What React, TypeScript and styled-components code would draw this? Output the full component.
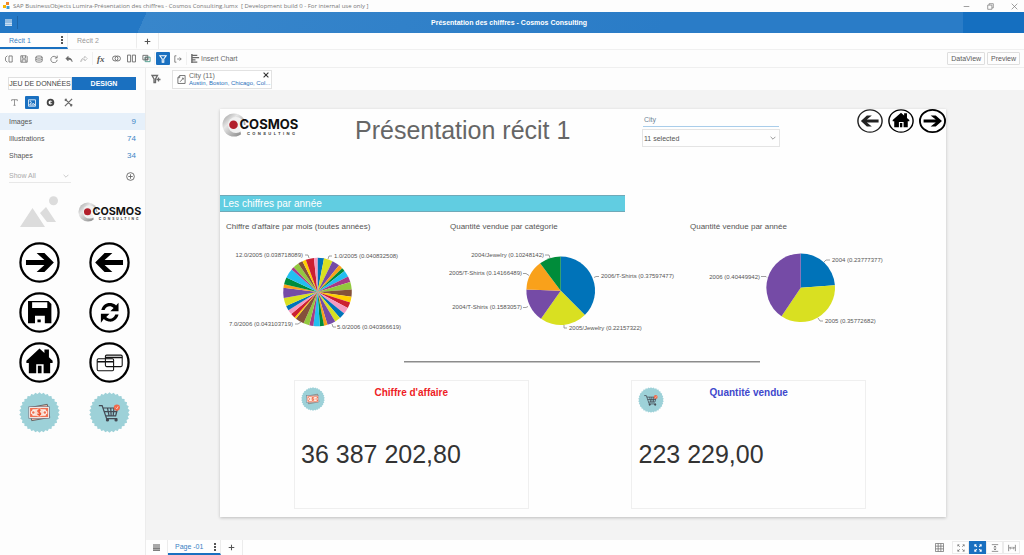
import React from "react";
import styled, { createGlobalStyle } from "styled-components";

const sans = `"Liberation Sans", Arial, sans-serif`;
const BLUE = "#1a70c0";
const GREY = "#6a6a6a";

const GlobalStyle = createGlobalStyle`
  *, *::before, *::after { box-sizing: border-box; }
  body { margin: 0; background: #fdfdfd; font-family: ${sans}; font-size: 7px; line-height: 9px; color: #555; }
  button, select { font: inherit; color: inherit; }
  button { border: 0; padding: 0; background: none; cursor: pointer; }
  svg { display: block; flex: none; }
  h1, h2, p, ul { margin: 0; padding: 0; }
`;

/* ---------- shell ---------- */

const App = styled.div`
  display: flex;
  flex-direction: column;
  min-height: 100vh;
`;

const WindowBar = styled.header`
  display: flex;
  align-items: center;
  gap: 3px;
  height: 12px;
  padding: 0 6px 0 3px;
  font-family: "Open Sans", sans-serif;
  font-size: 6px;
  color: #777;
  white-space: nowrap;
`;

const WindowControls = styled.div`
  display: flex;
  gap: 17px;
  margin-left: auto;
  color: #777;
`;

const AppBar = styled.div`
  display: grid;
  grid-template-columns: 1fr auto 1fr;
  align-items: center;
  height: 21px;
  padding-right: 6px;
  color: #fff;
  font-weight: 700;
  background:
    linear-gradient(90deg, transparent 94%, #156fc0 94%),
    linear-gradient(114deg, #2478c5 134px, #3886cb 134px, #2a7cc7 65%);
`;

const MenuButton = styled.button`
  display: flex;
  align-items: center;
  justify-content: center;
  width: 18px;
  height: 13px;
  border-right: 1px solid #1d64a6;
`;

const TabStrip = styled.nav<{ $height: number }>`
  display: flex;
  align-items: stretch;
  height: ${(p) => p.$height}px;
  border-bottom: 1px solid #f0f0f0;
  background: #fefefe;
`;

const Tab = styled.button<{ $active?: boolean; $width: number; $indent: number }>`
  display: flex;
  align-items: center;
  justify-content: space-between;
  width: ${(p) => p.$width}px;
  padding: 0 4px 0 ${(p) => p.$indent}px;
  border-right: 1px solid #ececec;
  border-bottom: 2px solid ${(p) => (p.$active ? BLUE : "transparent")};
  color: ${(p) => (p.$active ? "#3a7fc4" : "#999")};
`;

const TabTool = styled.button`
  display: flex;
  align-items: center;
  justify-content: center;
  width: 22px;
  border-right: 1px solid #ececec;
  color: #555;
`;

const Toolbar = styled.div`
  display: flex;
  align-items: center;
  height: 18px;
  padding: 0 4px 0 2px;
  border-bottom: 1px solid #efefef;
  color: ${GREY};
`;

const ToolGroup = styled.div`
  display: flex;
  align-items: center;
  gap: 1px;
  padding-right: 1px;
  margin-right: 1px;
  border-right: 1px solid #f0f0f0;
`;

const Tool = styled.button<{ $active?: boolean }>`
  display: flex;
  align-items: center;
  justify-content: center;
  width: 14px;
  height: 13px;
  border-radius: 1px;
  color: ${(p) => (p.$active ? "#fff" : "inherit")};
  background: ${(p) => (p.$active ? BLUE : "none")};
`;

const TextTool = styled.button`
  display: flex;
  align-items: center;
  gap: 1px;
  padding-left: 3px;
`;

const ToolbarEnd = styled.div`
  display: flex;
  gap: 2px;
  margin-left: auto;
`;

const OutlineButton = styled.button`
  height: 13px;
  padding: 0 3px;
  border: 1px solid #dedede;
  border-radius: 1px;
  color: #5a5a5a;
`;

const Body = styled.div`
  display: flex;
  flex: 1;
`;

/* ---------- sidebar ---------- */

const Sidebar = styled.aside`
  flex: none;
  width: 146px;
  border-right: 1px solid #ececec;
`;

const ModeSwitch = styled.div`
  display: flex;
  margin: 9px 9px 0 8px;
`;

const ModeButton = styled.button<{ $active?: boolean }>`
  flex: 1;
  height: 13px;
  border: 1px solid ${(p) => (p.$active ? BLUE : "#e0e0e0")};
  font-weight: ${(p) => (p.$active ? 700 : 400)};
  white-space: nowrap;
  color: ${(p) => (p.$active ? "#fff" : "#444")};
  background: ${(p) => (p.$active ? BLUE : "#fff")};
`;

const AssetTools = styled.div`
  display: flex;
  gap: 4px;
  padding: 6px 7px 4px;
  color: ${GREY};
`;

const AssetRow = styled.button<{ $active?: boolean }>`
  display: flex;
  align-items: center;
  justify-content: space-between;
  width: 100%;
  height: 17px;
  padding: 0 9px;
  background: ${(p) => (p.$active ? "#e6f0fa" : "none")};
`;

const Count = styled.span`
  font-size: 8px;
  color: #3d86c6;
`;

const ShowRow = styled.div`
  display: flex;
  align-items: center;
  justify-content: space-between;
  padding: 5px 10px 0 9px;
  color: #aaa;
`;

const SelectBox = styled.div<{ $boxed?: boolean }>`
  display: grid;
  grid-template-columns: 1fr 8px;
  align-items: center;
  width: ${(p) => (p.$boxed ? "100%" : "62px")};
  height: ${(p) => (p.$boxed ? 18 : 14)}px;
  padding: ${(p) => (p.$boxed ? "0 1px" : "0")};
  border: ${(p) => (p.$boxed ? "1px solid #e4e4e4" : "0 solid #e8e8e8")};
  border-bottom-width: 1px;
  select {
    grid-area: 1 / 1 / 2 / 3;
    width: 100%;
    padding: 0;
    border: 0;
    appearance: none;
    background: none;
  }
  svg {
    grid-area: 1 / 2;
    pointer-events: none;
  }
`;

const Thumbs = styled.div`
  display: grid;
  grid-template-columns: 1fr 1fr;
  grid-auto-rows: 50px;
  place-items: center;
  padding: 4px 0 0 4px;
`;

/* ---------- work area ---------- */

const Work = styled.main`
  display: flex;
  flex: 1;
  flex-direction: column;
  min-width: 0;
`;

const FilterBar = styled.div`
  display: flex;
  align-items: center;
  gap: 11px;
  height: 22px;
  padding-left: 5px;
  color: ${GREY};
`;

const FilterChip = styled.div`
  display: flex;
  align-items: center;
  gap: 3px;
  width: 100px;
  height: 19px;
  padding-left: 4px;
  border: 1px solid #e2e2e2;
  white-space: nowrap;
  background: #fff;
`;

const ChipText = styled.div`
  flex: 1;
  min-width: 0;
  line-height: 8px;
`;

const ChipValues = styled.div`
  font-size: 6px;
  line-height: 7px;
  color: #1f6fba;
`;

const ChipClose = styled.button`
  align-self: flex-start;
  margin: 0 1px 0 -12px;
  padding: 1px;
  color: #333;
`;

const Canvas = styled.div`
  flex: 1;
  padding: 19px 78px 23px 74px;
  background: #f3f3f3;
`;

const Report = styled.article`
  height: 100%;
  background: #fefefe;
  box-shadow: 0 1px 3px rgba(0, 0, 0, 0.22);
`;

const ReportHead = styled.header`
  display: grid;
  grid-template-columns: 135fr 287fr 138fr 166fr;
  align-items: start;
  height: 86px;
`;

const LogoSlot = styled.div`
  padding: 4px 0 0 2px;
`;

const ReportTitle = styled.h1`
  padding-top: 6px;
  font-size: 25px;
  font-weight: 400;
  line-height: 30px;
  white-space: nowrap;
  color: #666;
`;

const CityFilter = styled.div`
  padding-top: 4px;
  label {
    display: block;
    height: 14px;
    margin: 0 1px 2px;
    padding: 2px 0 0 1px;
    border-bottom: 1px solid #a9cdea;
    color: #6f8496;
  }
`;

const PageNav = styled.nav`
  display: flex;
  justify-content: flex-end;
  gap: 5px;
`;

const Banner = styled.h2`
  width: 55.8%;
  height: 17px;
  padding-left: 3px;
  border: solid #6fa9b8;
  border-width: 1px 0;
  font-size: 10px;
  font-weight: 400;
  line-height: 15px;
  color: #fff;
  background: #61cde1;
`;

const Charts = styled.section`
  display: grid;
  grid-template-columns: 224fr 240fr 262fr;
  padding-top: 10px;
`;

const Chart = styled.figure`
  margin: 0;
  padding-left: 6px;
  figcaption {
    margin-bottom: 8px;
    font-size: 8px;
    line-height: 10px;
    white-space: nowrap;
    color: #555;
  }
  svg { overflow: visible; }
`;

const Rule = styled.hr`
  width: 49%;
  height: 2px;
  margin: 21px 0 17px 25.4%;
  border: 0;
  border-top: 1px solid #8c8c8c;
  border-bottom: 1px solid #c5c5c5;
`;

const Kpis = styled.section`
  display: flex;
  justify-content: space-between;
  padding: 0 80px 8px 74px;
`;

const Kpi = styled.div`
  width: 41%;
  height: 129px;
  padding: 6px;
  border: 1px solid #efefef;
`;

const KpiHead = styled.div`
  display: grid;
  grid-template-columns: 1fr auto 1fr;
  height: 50px;
`;

const KpiTitle = styled.h2<{ $color: string }>`
  font-size: 10px;
  line-height: 11px;
  color: ${(p) => p.$color};
`;

const KpiValue = styled.p`
  font-size: 25px;
  line-height: 34px;
  color: #333;
`;

const Footer = styled.footer`
  display: flex;
  align-items: stretch;
  justify-content: space-between;
  height: 15px;
  background: #fefefe;
`;

const FooterPages = styled.div`
  display: flex;
`;

const ViewTools = styled.div`
  display: flex;
  align-items: center;
  padding-right: 4px;
  color: #777;
`;

const ViewTool = styled.button<{ $active?: boolean; $plain?: boolean }>`
  display: flex;
  align-items: center;
  justify-content: center;
  width: 17px;
  height: 13px;
  margin-right: ${(p) => (p.$plain ? 4 : 0)}px;
  border: ${(p) => (p.$plain ? 0 : 1)}px solid ${(p) => (p.$active ? BLUE : "#ececec")};
  color: ${(p) => (p.$active ? "#fff" : "inherit")};
  background: ${(p) => (p.$active ? BLUE : "none")};
`;

/* ---------- icons ---------- */

type IconProps = { size?: number; sw?: number; children: React.ReactNode };

const Icon = ({ size = 9, sw = 1, children }: IconProps) => (
  <svg width={size} height={size} viewBox="0 0 10 10" fill="none" stroke="currentColor" strokeWidth={sw} aria-hidden="true">
    {children}
  </svg>
);

const MenuLines = () => (
  <Icon size={7} sw={1.6}><path d="M0 1.4h10M0 4.2h10M0 7h10M0 9.6h10" /></Icon>
);
const Dots = () => (
  <svg width="2" height="8" viewBox="0 0 2 8" fill="#555" aria-hidden="true">
    <path d="M0 0h2v2H0zM0 3h2v2H0zM0 6h2v2H0z" />
  </svg>
);
const Plus = () => <Icon size={7} sw={1.5}><path d="M5 1v8M1 5h8" /></Icon>;
const Chevron = () => <Icon size={6}><path d="M1 3l4 4 4-4" /></Icon>;

const fileTools = [
  { name: "Panel", art: <path d="M3 1L.6 3v4L3 9M5 1.2h4v7.6H5z" /> },
  { name: "Save", art: <path d="M1 1h7l1 1v7H1zM3 1v3h4V1M2.6 9V6h4.8v3" /> },
  { name: "Data", art: <path d="M1 2.6C1 .8 9 .8 9 2.6S1 4.400 1 2.600v5C1 9.400 9 9.400 9 7.600v-5M1 5c0 1.800 8 1.800 8 0" /> },
  { name: "Refresh", art: <path d="M8.400 3.500A4 4 0 1 0 9 6M9 .8v3H6" /> },
  { name: "Undo", art: <path d="M4 1.500L1 4.500l3 3v-2c3 0 4 1 5 3 0-3-2-5-5-5z" fill="currentColor" strokeWidth=".6" /> },
  { name: "Redo", art: <path d="M6 1.500l3 3-3 3v-2c-3 0-4 1-5 3 0-3 2-5 5-5z" strokeWidth=".6" opacity=".7" /> },
];

const dataTools = [
  { name: "Merge", art: <><ellipse cx="3.600" cy="5" rx="3" ry="2.800" /><ellipse cx="6.400" cy="5" rx="3" ry="2.800" /></> },
  { name: "Columns", art: <path d="M.6 1.200h3.400v7.600H.6zM6 1.200h3.400v7.600H6z" /> },
  { name: "Link", art: <><path d="M1 1.500h5.500v5H1z" /><path d="M3.500 3.500H9v5H3.500z" stroke="#4a9a8a" /><path d="M3.500 3.500h3v3h-3z" fill="currentColor" fillOpacity=".3" /></> },
];

const CircleIcon = ({ width = 41, height = width, line = 5.5, shade = "#000", children }: { width?: number; height?: number; line?: number; shade?: string; children: React.ReactNode }) => (
  <svg width={width} height={height} viewBox="0 0 100 100" preserveAspectRatio="none" fill={shade} stroke="none" aria-hidden="true">
    <circle cx="50" cy="50" r="46.500" fill="#fff" stroke={shade} strokeWidth={line} />
    {children}
  </svg>
);

const ArrowRight = <path d="M17 44h45L43 27h19l23 23-23 23H43l19-17H17z" />;
const ArrowLeft = <path d="M83 44H38l19-17H38L15 50l23 23h19L38 56h45z" />;
const House = (
  <path d="M50 16l12 11v-9h11v19l9 9v5h-6v25H60V54H42v22H24V51h-6v-5zM46 58h9v18h-9z" />
);
const Floppy = (
  <path fillRule="evenodd" d="M22 22h50l7 7v47H63V58H39v18H22zM32 25v14h37V25zM45 67h8v7h-8z" />
);
const Refresh = (
  <g>
    <path d="M30 44c3-13 14-19 24-17 6 1 9 3 12 6l6-7v21H52l8-8c-8-8-19-4-22 5z" />
    <path d="M72 55c-3 13-14 19-24 17-6-1-9-3-12-6l-7 9V53h21l-8 8c8 8 19 4 22-6z" />
  </g>
);
const Windows = (
  <g fill="none" stroke="#111" strokeWidth="2.600">
    <rect x="40" y="32" width="41" height="28" rx="3" />
    <rect x="20" y="41" width="40" height="29" rx="3" />
    <path d="M40 38h41M20 48h40" strokeWidth="3.500" />
  </g>
);

const scallop = Array.from({ length: 60 }, (_, i) => {
  const a = (i * Math.PI) / 30;
  const r = i % 2 ? 45.5 : 49.5;
  return `${(50 + r * Math.sin(a)).toFixed(1)},${(50 - r * Math.cos(a)).toFixed(1)}`;
}).join(" ");

const Badge = ({ size, children }: { size: number; children: React.ReactNode }) => (
  <svg width={size} height={size} viewBox="0 0 100 100" aria-hidden="true">
    <polygon points={scallop} fill="#9dd1d8" />
    {children}
  </svg>
);

const Money = (
  <g>
    <path d="M25 38l44-8 6 32-44 8z" fill="#e9b7a5" stroke="#555" strokeWidth="2" />
    <rect x="24" y="36" width="50" height="28" fill="#f9f3ee" stroke="#667" strokeWidth="1.500" />
    <rect x="27" y="39" width="44" height="22" fill="#f07152" />
    <path d="M33 42h32c0 3 2 5 4 5v6c-2 0-4 2-4 5H33c0-3-2-5-4-5v-6c2 0 4-2 4-5z" fill="#fbeee8" />
    <ellipse cx="49" cy="50" rx="10" ry="10" fill="#f8dccf" />
    <path d="M53 45c-3-3-8-1-7 2 1 4 7 2 7 6 0 3-6 4-8 0M49.500 41v18" fill="none" stroke="#f0532f" strokeWidth="2.800" />
    <circle cx="35" cy="50" r="3" fill="#f07152" />
    <circle cx="63" cy="50" r="3" fill="#f07152" />
  </g>
);

const Cart = (
  <g fill="none" stroke="#444b55" strokeWidth="3">
    <path d="M24 33h8l11 32h26M34 39h36l-5 19H41M37 48h31M45 39l4 19M53 39l1 19M61 39l-2 19" />
    <circle cx="45" cy="68" r="2.500" fill="#333" />
    <circle cx="66" cy="68" r="2.500" fill="#333" />
    <circle cx="68" cy="38" r="7.500" fill="#f0694a" stroke="none" />
    <path d="M65 38l3 3 3-6" stroke="#fbd9cf" strokeWidth="2" />
  </g>
);

const CosmosLogo = ({ id, width }: { id: string; width: number }) => (
  <svg width={width} viewBox="0 0 76 24" overflow="visible" role="img" aria-label="Cosmos Consulting">
    <defs>
      <linearGradient id={id} x1="0" y1="0" x2="1" y2="1">
        <stop offset="0" stopColor="#999" />
        <stop offset=".35" stopColor="#e6e6e6" />
        <stop offset=".6" stopColor="#bbb" />
        <stop offset="1" stopColor="#777" />
      </linearGradient>
    </defs>
    <circle cx="12" cy="12" r="11.500" fill={`url(#${id})`} />
    <circle cx="14" cy="12" r="8" fill="#f1f1f1" />
    <path d="M17 12h7v9h-5z" fill="#fefefe" />
    <circle cx="11.500" cy="11.800" r="4.300" fill="#b21f2b" />
    <text x="17.500" y="15.500" fontFamily="Inter, sans-serif" fontSize="13" fontWeight="700" fill="#111">COSMOS</text>
    <text x="25" y="21.500" fontFamily="Inter, sans-serif" fontSize="4" fontWeight="700" letterSpacing="2.400" fill="#444">CONSULTING</text>
  </svg>
);

/* ---------- charts ---------- */

const palette = ["#0073b9", "#d9e021", "#754ba6", "#f9a11b", "#008c3a", "#22bff0", "#a63a87", "#93c83e", "#84513a", "#ffcf00", "#cc2031", "#f49ac1"];

type Label = { text: string; x: number; y: number; end?: boolean; lead: string };
type PieData = { title: string; cx: number; cy: number; stops: number[]; colors: string[]; labels: Label[] };

const slice = (cx: number, cy: number, r: number, from: number, to: number) => {
  const pt = (deg: number) => {
    const a = (deg * Math.PI) / 180;
    return `${(cx + r * Math.sin(a)).toFixed(2)} ${(cy - r * Math.cos(a)).toFixed(2)}`;
  };
  return `M${cx} ${cy}L${pt(from)}A${r} ${r} 0 ${to - from > 180 ? 1 : 0} 1 ${pt(to)}Z`;
};

const pies: PieData[] = [
  {
    title: "Chiffre d'affaire par mois (toutes années)",
    cx: 91.5,
    cy: 52,
    stops: [0, 11, 26, 39, 46, 52, 63, 73, 86, 98, 108, 118, 129, 139, 149, 163, 169, 176, 187, 194, 204, 219, 222, 230, 238, 246, 260, 277, 283, 295, 311, 316, 326, 334, 340, 354, 360],
    colors: palette,
    labels: [
      { text: "12.0/2005 (0.038718089)", x: 77, y: 17, end: true, lead: "M79 15h3l1 3" },
      { text: "1.0/2005 (0.040832508)", x: 108, y: 18, lead: "M106 16h-3l-1 3" },
      { text: "7.0/2006 (0.043103719)", x: 67, y: 86, end: true, lead: "M69 84h3l3-2" },
      { text: "5.0/2006 (0.040366619)", x: 111, y: 89, lead: "M110 87h-3l-1-3" },
    ],
  },
  {
    title: "Quantité vendue par catégorie",
    cx: 110.7,
    cy: 50.7,
    stops: [0, 135.3, 215.1, 272.1, 323.1, 360],
    colors: palette,
    labels: [
      { text: "2004/Jewelry (0.10248142)", x: 94, y: 17, end: true, lead: "M95 15h4l1 3" },
      { text: "2006/T-Shirts (0.37597477)", x: 151, y: 38, lead: "M149 36.500h-3l-2 1" },
      { text: "2005/T-Shirts (0.14166489)", x: 72, y: 35, end: true, lead: "M73 33.500h3l3 2" },
      { text: "2004/T-Shirts (0.1583057)", x: 72, y: 69, end: true, lead: "M73 67.500h3l2-1" },
      { text: "2005/Jewelry (0.22157322)", x: 119, y: 90, lead: "M117 88h-3v-3" },
    ],
  },
  {
    title: "Quantité vendue par année",
    cx: 110.7,
    cy: 47.7,
    stops: [0, 86, 214, 360],
    colors: palette,
    labels: [
      { text: "2004 (0.23777377)", x: 142, y: 22, lead: "M140 20h-4l-2 2" },
      { text: "2006 (0.40449942)", x: 70, y: 39, end: true, lead: "M71 36.500h5l1 1" },
      { text: "2005 (0.35772682)", x: 135, y: 83, lead: "M133 81h-3l-2-3" },
    ],
  },
];

const Pie = ({ data }: { data: PieData }) => (
  <Chart>
    <figcaption>{data.title}</figcaption>
    <svg width="218" height="100" viewBox="0 0 218 100" fontSize="6" fill="#555">
      {data.stops.slice(1).map((to, i) => (
        <path key={to} d={slice(data.cx, data.cy, 34.3, data.stops[i], to)} fill={data.colors[i % data.colors.length]} />
      ))}
      {data.labels.map((l) => (
        <g key={l.text}>
          <path d={l.lead} fill="none" stroke="#888" strokeWidth=".8" />
          <text x={l.x} y={l.y} textAnchor={l.end ? "end" : "start"}>{l.text}</text>
        </g>
      ))}
    </svg>
  </Chart>
);

/* ---------- page ---------- */

export default function LumiraDesigner() {
  return (
    <App>
      <GlobalStyle />
      <WindowBar>
        <svg width="7" height="8" viewBox="0 0 7 8" aria-hidden="true">
          <path d="M0 3h3v3H0z" fill="#f7b500" />
          <path d="M3 0h3v3H3z" fill="#f0862a" />
          <path d="M3.500 4h3v3h-3z" fill="#3a9bd8" />
        </svg>
        <span>SAP BusinessObjects Lumira-Présentation des chiffres - Cosmos Consulting.lumx&nbsp; [ Development build 0 - For internal use only ]</span>
        <WindowControls>
          <button aria-label="Minimize"><Icon size={7}><path d="M1 5h8" /></Icon></button>
          <button aria-label="Restore"><Icon size={7}><path d="M1 3h6v6H1zM3 3V1h6v6H7" /></Icon></button>
          <button aria-label="Close"><Icon size={7}><path d="M1 1l8 8M9 1L1 9" /></Icon></button>
        </WindowControls>
      </WindowBar>

      <AppBar>
        <MenuButton aria-label="Menu"><MenuLines /></MenuButton>
        <span>Présentation des chiffres - Cosmos Consulting</span>
      </AppBar>

      <TabStrip $height={17} aria-label="Stories">
        <Tab $active $width={68} $indent={9}>Récit 1<Dots /></Tab>
        <Tab $width={69} $indent={9}>Récit 2</Tab>
        <TabTool aria-label="Add story"><Plus /></TabTool>
      </TabStrip>

      <Toolbar>
        <ToolGroup>
          {fileTools.map((t) => <Tool key={t.name} aria-label={t.name}><Icon size={8}>{t.art}</Icon></Tool>)}
        </ToolGroup>
        <ToolGroup>
          <Tool aria-label="Formula">
            <svg width="10" height="10" viewBox="0 0 10 10" aria-hidden="true">
              <text x="1" y="8" fontFamily="Liberation Serif, serif" fontStyle="italic" fontWeight="700" fontSize="9" fill="#555">fx</text>
            </svg>
          </Tool>
          {dataTools.map((t) => <Tool key={t.name} aria-label={t.name}><Icon>{t.art}</Icon></Tool>)}
        </ToolGroup>
        <ToolGroup>
          <Tool $active aria-label="Filter bar"><Icon size={8} sw={1.3}><path d="M1 1h8L6 5v4H4V5z" /></Icon></Tool>
          <Tool aria-label="Export"><Icon size={8}><path d="M3 1H1v8h2M4 5h5M7 3l2 2-2 2" /></Icon></Tool>
        </ToolGroup>
        <TextTool>
          <Icon size={9} sw={1.6}><path d="M1 0v10M1 1.500h6M1 4h8M1 6.500h4M1 9h6" /></Icon>
          Insert Chart
        </TextTool>
        <ToolbarEnd>
          <OutlineButton>DataView</OutlineButton>
          <OutlineButton>Preview</OutlineButton>
        </ToolbarEnd>
      </Toolbar>

      <Body>
        <Sidebar>
          <ModeSwitch>
            <ModeButton>JEU DE DONNÉES</ModeButton>
            <ModeButton $active>DESIGN</ModeButton>
          </ModeSwitch>
          <AssetTools>
            <Tool aria-label="Text"><Icon size={7}><path d="M1 3V1h8v2M5 1v8M3.500 9h3" /></Icon></Tool>
            <Tool $active aria-label="Pictures"><Icon size={8}><path d="M.6 1h8.800v8H.6zM2 7.500l2-3 2 2 1-1 1.500 2z" /><circle cx="3" cy="3" r=".5" /></Icon></Tool>
            <Tool aria-label="Colours"><Icon size={9} sw={2}><circle cx="5" cy="5" r="3.200" stroke="#444" /><path d="M5 5h3" stroke="#444" /></Icon></Tool>
            <Tool aria-label="Styles"><Icon size={9}><path d="M1 1l8 8M9 1L1 9M1 3l2-2M7 9l2-2" strokeWidth="1.400" /></Icon></Tool>
          </AssetTools>
          <AssetRow $active>Images<Count>9</Count></AssetRow>
          <AssetRow>Illustrations<Count>74</Count></AssetRow>
          <AssetRow>Shapes<Count>34</Count></AssetRow>
          <ShowRow>
            <SelectBox>
              <select aria-label="Show"><option>Show All</option></select>
              <Chevron />
            </SelectBox>
            <button aria-label="Add image">
              <Icon size={9}><circle cx="5" cy="5" r="4.300" stroke="#666" /><path d="M5 2.500v5M2.500 5h5" stroke="#666" /></Icon>
            </button>
          </ShowRow>
          <Thumbs>
            <svg width="38" height="32" viewBox="0 0 38 32" fill="#dcdcdc" aria-hidden="true">
              <circle cx="33.500" cy="4.700" r="4.500" />
              <path d="M0 31l12.500-19L25 31zM20 17l6-6 10 15h-9z" />
            </svg>
            <CosmosLogo id="steel-thumb" width={63} />
            <CircleIcon>{ArrowRight}</CircleIcon>
            <CircleIcon>{ArrowLeft}</CircleIcon>
            <CircleIcon>{Floppy}</CircleIcon>
            <CircleIcon>{Refresh}</CircleIcon>
            <CircleIcon>{House}</CircleIcon>
            <CircleIcon>{Windows}</CircleIcon>
            <Badge size={41}>{Money}</Badge>
            <Badge size={41}>{Cart}</Badge>
          </Thumbs>
        </Sidebar>

        <Work>
          <FilterBar>
            <button aria-label="Add filter">
              <Icon size={10} sw={1.3}><path d="M1 1.500h5.500L4.500 5v3.500h-1.500V5zM7.500 3.500v4M5.500 5.500h4" /></Icon>
            </button>
            <FilterChip>
              <Icon size={9}><path d="M3 .6h6v8.800H1V3zM3 .6V3H1M3.500 7.500L7 3.500M7 3.500H5.500M7 3.500V5" /></Icon>
              <ChipText>
                <div>City (11)</div>
                <ChipValues>Austin, Boston, Chicago, Col...</ChipValues>
              </ChipText>
              <ChipClose aria-label="Remove filter"><Icon size={6} sw={1.8}><path d="M1 1l8 8M9 1L1 9" /></Icon></ChipClose>
            </FilterChip>
          </FilterBar>

          <Canvas>
            <Report>
              <ReportHead>
                <LogoSlot><CosmosLogo id="steel-report" width={76} /></LogoSlot>
                <ReportTitle>Présentation récit 1</ReportTitle>
                <CityFilter>
                  <label htmlFor="city">City</label>
                  <SelectBox $boxed>
                    <select id="city"><option>11 selected</option></select>
                    <Chevron />
                  </SelectBox>
                </CityFilter>
                <PageNav aria-label="Report pages">
                  <button aria-label="Previous page"><CircleIcon width={26} height={24} shade="#222">{ArrowLeft}</CircleIcon></button>
                  <button aria-label="Home page"><CircleIcon width={26} height={24}>{House}</CircleIcon></button>
                  <button aria-label="Next page"><CircleIcon width={27} height={24} line={7}>{ArrowRight}</CircleIcon></button>
                </PageNav>
              </ReportHead>
              <Banner>Les chiffres par année</Banner>
              <Charts>
                {pies.map((p) => <Pie key={p.title} data={p} />)}
              </Charts>
              <Rule />
              <Kpis>
                <Kpi>
                  <KpiHead>
                    <Badge size={24}>{Money}</Badge>
                    <KpiTitle $color="#ee1c25">Chiffre d'affaire</KpiTitle>
                  </KpiHead>
                  <KpiValue>36 387 202,80</KpiValue>
                </Kpi>
                <Kpi>
                  <KpiHead>
                    <Badge size={26}>{Cart}</Badge>
                    <KpiTitle $color="#3f48cc">Quantité vendue</KpiTitle>
                  </KpiHead>
                  <KpiValue>223 229,00</KpiValue>
                </Kpi>
              </Kpis>
            </Report>
          </Canvas>

          <Footer>
            <FooterPages>
              <TabTool aria-label="Page list"><MenuLines /></TabTool>
              <Tab $active $width={53} $indent={7}>Page -01<Dots /></Tab>
              <TabTool aria-label="Add page"><Plus /></TabTool>
            </FooterPages>
            <ViewTools>
              <ViewTool $plain aria-label="Grid"><Icon size={9} sw={0.9}><path d="M.5.5h9v9h-9zM3.500.5v9M6.500.5v9M.5 3.500h9M.5 6.500h9" /></Icon></ViewTool>
              <ViewTool aria-label="Actual size"><Icon size={8}><path d="M1 3V1h2M7 1h2v2M9 7v2H7M3 9H1V7M1 1l2.500 2.500M9 1L6.500 3.500M1 9l2.500-2.500M9 9L6.500 6.500" /></Icon></ViewTool>
              <ViewTool $active aria-label="Fit page"><Icon size={8} sw={1.3}><path d="M1 3V1h2M7 1h2v2M9 7v2H7M3 9H1V7M1 1l2.500 2.500M9 1L6.500 3.500M1 9l2.500-2.500M9 9L6.500 6.500" /></Icon></ViewTool>
              <ViewTool aria-label="Fit height"><Icon size={8}><path d="M1 .8h8M1 9.200h8M5 2.500v5M3.500 4L5 2.500 6.500 4M3.500 6L5 7.500 6.500 6" /></Icon></ViewTool>
              <ViewTool aria-label="Fit width"><Icon size={8}><path d="M.8 1v8M9.200 1v8M2 5h6M3.500 3.500L2 5l1.500 1.500M6.500 3.500L8 5 6.500 6.500" /></Icon></ViewTool>
            </ViewTools>
          </Footer>
        </Work>
      </Body>
    </App>
  );
}
